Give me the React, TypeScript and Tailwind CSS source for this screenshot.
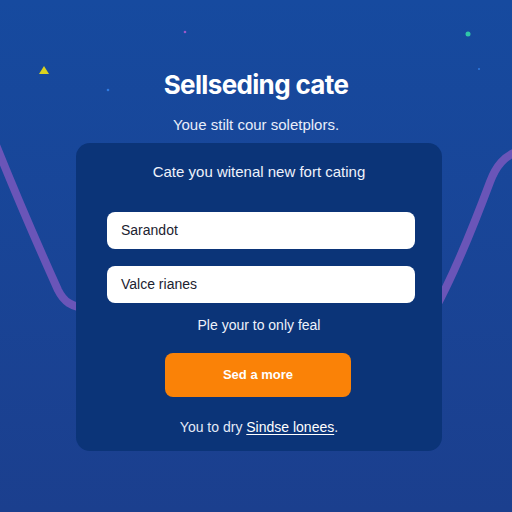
import React from "react";

// Background ribbons and sparkles behind the sign-up card
function Backdrop() {
  return (
    <svg className="absolute inset-0" width="512" height="512" viewBox="0 0 512 512" fill="none">
      <path d="M-6 140 C 10 180, 40 250, 58 290 C 64 302, 70 306, 90 310" stroke="#6a55b8" strokeWidth="8" strokeLinecap="round" />
      <path d="M430 318 C 452 280, 472 230, 490 182 C 496 166, 504 156, 520 150" stroke="#6a55b8" strokeWidth="8" strokeLinecap="round" />
      <polygon points="44,66 49,74 39,74" fill="#d9d21f" />
      <circle cx="468" cy="34" r="2.5" fill="#2fc7a8" />
      <circle cx="185" cy="32" r="1.3" fill="#9a58c8" />
      <circle cx="108" cy="90" r="1.3" fill="#2f7ae0" />
      <circle cx="479" cy="69" r="1" fill="#2f7ae0" />
    </svg>
  );
}

export default function App() {
  return (
    <div className="relative w-[512px] h-[512px] overflow-hidden bg-gradient-to-b from-[#164a9f] to-[#1b3f8e]" style={{ fontFamily: '"Liberation Sans", Arial, sans-serif' }}>
      <Backdrop />

      <div className="relative flex flex-col items-center pt-[69px]">
        <h1 className="text-[26px] leading-[32px] font-bold text-white tracking-tight" style={{ fontFamily: 'Inter, "Liberation Sans", sans-serif' }}>
          Sellseding cate
        </h1>
        <p className="mt-[14px] text-[15px] leading-[20px] text-[#e8eefa]">Youe stilt cour soletplors.</p>

        <div className="mt-[8px] ml-[6px] w-[366px] h-[308px] rounded-[14px] bg-[#0b3478] flex flex-col pt-[19px]">
          <p className="text-center text-[15px] leading-[20px] text-[#eef2fb]">Cate you witenal new fort cating</p>

          <div className="mt-[30px] ml-[31px] w-[308px] h-[37px] rounded-[8px] bg-white flex items-center px-[14px] text-[14px] text-[#1c2230]">
            Sarandot
          </div>
          <div className="mt-[17px] ml-[31px] w-[308px] h-[37px] rounded-[8px] bg-white flex items-center px-[14px] text-[14px] text-[#1c2230]">
            Valce rianes
          </div>

          <p className="mt-[12px] text-center text-[14px] leading-[20px] text-[#eef2fb]">Ple your to only feal</p>

          <button className="mt-[18px] ml-[89px] w-[186px] h-[44px] rounded-[8px] bg-[#fa8207] text-white text-[13px] font-bold">
            Sed a more
          </button>

          <p className="mt-[20px] text-center text-[14px] leading-[20px] text-[#e4eaf7]">
            You to dry <span className="underline underline-offset-2 text-white">Sindse lonees</span>.
          </p>
        </div>
      </div>
    </div>
  );
}
